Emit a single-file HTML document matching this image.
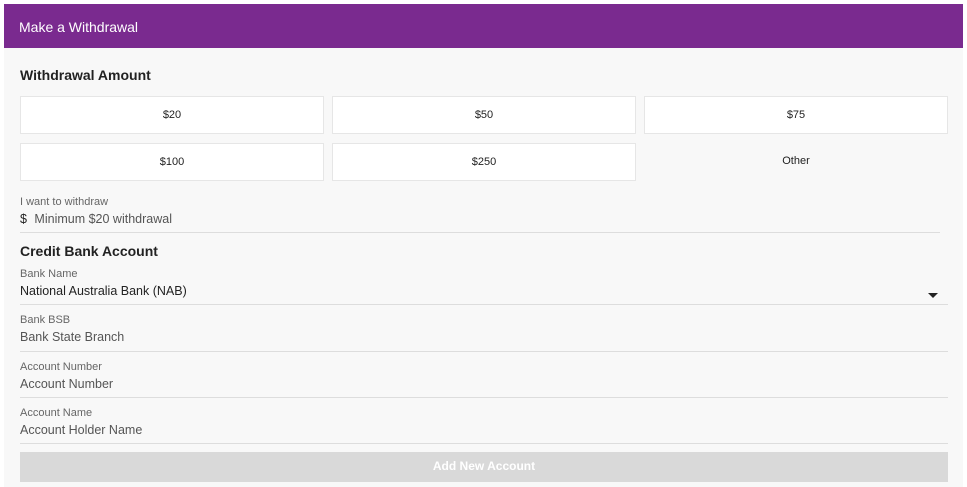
<!DOCTYPE html><html><head><style>
*{margin:0;padding:0;box-sizing:border-box}
body{width:967px;height:487px;background:#fff;font-family:"Liberation Sans",sans-serif;position:relative;overflow:hidden}
.panel{position:absolute;left:4px;top:4px;width:959px;height:483px;background:#f8f8f8}
.hdr{position:absolute;left:4px;top:4px;width:959px;height:44px;background:#7a2a8f;color:#fff;font-size:14px;line-height:46px;padding-left:15px}
.h{position:absolute;left:20px;font-size:14px;font-weight:bold;color:#222}
.b{position:absolute;width:304px;height:38px;background:#fff;border:1px solid #e6e6e6;font-size:11px;color:#222;text-align:center;line-height:37px}
.lbl{position:absolute;left:20px;font-size:11px;color:#666}
.val{position:absolute;left:20px;font-size:12.5px;color:#555}
.ln{position:absolute;left:20px;width:928px;height:1px;background:#ddd}
</style></head><body>
<div class="panel"></div>
<div class="hdr">Make a Withdrawal</div>
<div class="h" style="top:67px">Withdrawal Amount</div>
<div class="b" style="left:20px;top:96px">$20</div>
<div class="b" style="left:332px;top:96px">$50</div>
<div class="b" style="left:644px;top:96px">$75</div>
<div class="b" style="left:20px;top:143px">$100</div>
<div class="b" style="left:332px;top:143px">$250</div>
<div class="b" style="left:644px;top:143px;background:none;border:none">Other</div>
<div class="lbl" style="top:196px">I want to withdraw</div>
<div class="val" style="top:212px"><span style="color:#222;margin-right:4px">$</span> Minimum $20 withdrawal</div>
<div class="ln" style="top:232px;width:920px"></div>
<div class="h" style="top:243px">Credit Bank Account</div>
<div class="lbl" style="top:268px">Bank Name</div>
<div class="val" style="top:284px;color:#222">National Australia Bank (NAB)</div>
<div style="position:absolute;left:928px;top:293px;border-left:5px solid transparent;border-right:5px solid transparent;border-top:5px solid #222"></div>
<div class="ln" style="top:304px"></div>
<div class="lbl" style="top:314px">Bank BSB</div>
<div class="val" style="top:330px">Bank State Branch</div>
<div class="ln" style="top:351px"></div>
<div class="lbl" style="top:361px">Account Number</div>
<div class="val" style="top:377px">Account Number</div>
<div class="ln" style="top:397px"></div>
<div class="lbl" style="top:407px">Account Name</div>
<div class="val" style="top:423px">Account Holder Name</div>
<div class="ln" style="top:443px"></div>
<div style="position:absolute;left:20px;top:452px;width:928px;height:30px;background:#d9d9d9;color:#fff;font-size:12px;font-weight:bold;text-align:center;line-height:28px">Add New Account</div>
</body></html>
